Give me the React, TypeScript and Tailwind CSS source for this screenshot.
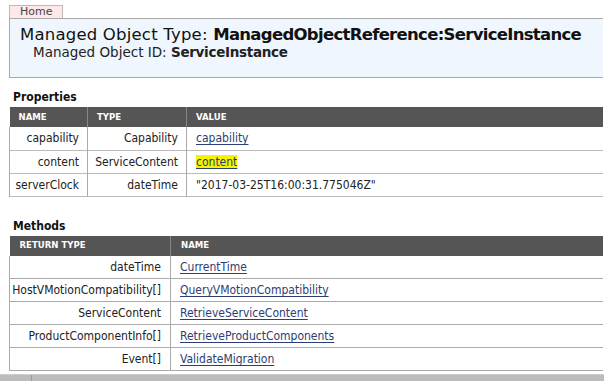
const props = [
  { name: "capability", type: "Capability", value: "capability", link: true },
  { name: "content", type: "ServiceContent", value: "content", link: true, mark: true },
  { name: "serverClock", type: "dateTime", value: "\"2017-03-25T16:00:31.775046Z\"", link: false },
];

const methods = [
  { ret: "dateTime", name: "CurrentTime" },
  { ret: "HostVMotionCompatibility[]", name: "QueryVMotionCompatibility" },
  { ret: "ServiceContent", name: "RetrieveServiceContent" },
  { ret: "ProductComponentInfo[]", name: "RetrieveProductComponents" },
  { ret: "Event[]", name: "ValidateMigration" },
];

function Link({ text, mark }: { text: string; mark?: boolean }) {
  return (
    <a
      href="#"
      className={
        "text-[#2c3e73] underline underline-offset-2 " + (mark ? "bg-[#f4f400]" : "")
      }
    >
      {text}
    </a>
  );
}

export default function App() {
  return (
    <div className="relative h-[381px] w-[614px] overflow-hidden bg-white text-[#222] [font-family:'DejaVu_Sans',Verdana,sans-serif]">
      <div className="pl-[9px] pr-[11px] pt-[5px]">
        <div className="w-fit border border-b-0 border-[#bbb] bg-[#fde9e9] px-[10px] text-[11px] leading-[12px] text-[#444]">
          Home
        </div>
        <div className="h-[60px] border-y border-l border-[#aaa] bg-[#eff6fd] pl-[10px] pt-[6px]">
          <div className="whitespace-nowrap text-[16.5px] leading-[19px] tracking-[0.2px] text-[#111]">
            Managed Object Type:{" "}
            <b className="tracking-[-0.7px]">ManagedObjectReference:ServiceInstance</b>
          </div>
          <div className="pl-[13px] text-[13.5px] leading-[17px] text-[#222]">
            Managed Object ID: <b className="tracking-[-0.3px]">ServiceInstance</b>
          </div>
        </div>

        <div className="[font-family:'DejaVu_Sans_Condensed','DejaVu_Sans',sans-serif]">
          <h2 className="mt-[9px] pl-[4px] text-[12px] font-bold leading-[20px] text-[#111]">
            Properties
          </h2>
          <table className="w-full table-fixed border-collapse text-[12px]">
            <thead>
              <tr className="h-[20px] bg-[#555] text-left text-[9.5px] font-bold text-white">
                <th className="w-[78px] border-r border-[#888] pl-[9px]">NAME</th>
                <th className="w-[99px] border-r border-[#888] pl-[9px]">TYPE</th>
                <th className="pl-[9px]">VALUE</th>
              </tr>
            </thead>
            <tbody>
              {props.map((p) => (
                <tr key={p.name} className="h-[23px] border-b border-[#bbb]">
                  <td className="border-x border-[#aaa] pr-[8px] text-right">{p.name}</td>
                  <td className="border-r border-[#aaa] pr-[8px] text-right">{p.type}</td>
                  <td className="pl-[9px]">
                    {p.link ? <Link text={p.value} mark={p.mark} /> : p.value}
                  </td>
                </tr>
              ))}
            </tbody>
          </table>

          <h2 className="mt-[19px] pl-[4px] text-[12px] font-bold leading-[20px] text-[#111]">
            Methods
          </h2>
          <table className="w-full table-fixed border-collapse text-[12px]">
            <thead>
              <tr className="h-[20px] bg-[#555] text-left text-[9.5px] font-bold text-white">
                <th className="w-[161px] border-r border-[#888] pl-[10px]">RETURN TYPE</th>
                <th className="pl-[10px]">NAME</th>
              </tr>
            </thead>
            <tbody>
              {methods.map((m) => (
                <tr key={m.name} className="h-[23px] border-b border-[#aaa]">
                  <td className="border-x border-[#aaa] pr-[9px] text-right">{m.ret}</td>
                  <td className="pl-[9px]">
                    <Link text={m.name} />
                  </td>
                </tr>
              ))}
            </tbody>
          </table>
        </div>
      </div>
      <div className="absolute bottom-0 left-0 h-[7px] w-[604px] border-t border-[#ccc] bg-[#bdbdbd]">
        <div className="ml-[31px] h-full w-px bg-[#999]" />
      </div>
    </div>
  );
}
